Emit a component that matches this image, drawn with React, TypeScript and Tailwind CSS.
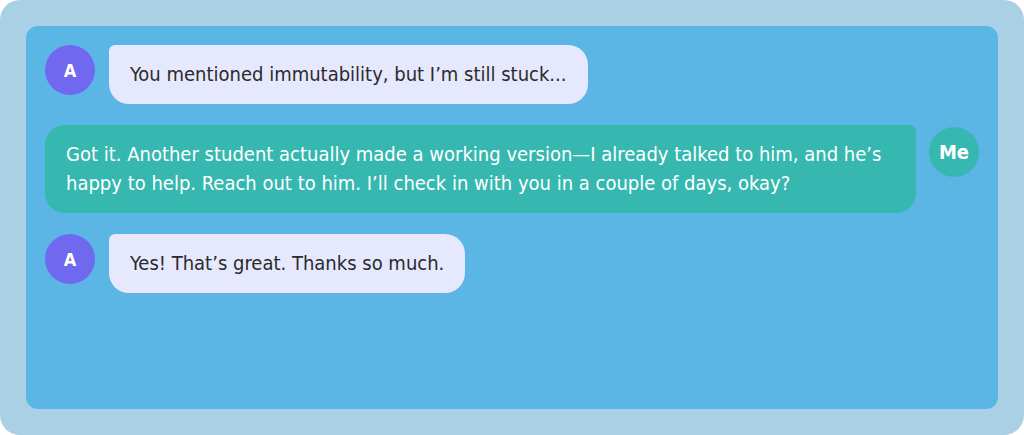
import React from 'react';

type Msg = { from: 'them' | 'me'; text: string };

const messages: Msg[] = [
  { from: 'them', text: 'You mentioned immutability, but I’m still stuck...' },
  {
    from: 'me',
    text: 'Got it. Another student actually made a working version—I already talked to him, and he’s happy to help. Reach out to him. I’ll check in with you in a couple of days, okay?',
  },
  { from: 'them', text: 'Yes! That’s great. Thanks so much.' },
];

const Avatar: React.FC<{ label: string; me?: boolean }> = ({ label, me }) => (
  <div
    className={
      me
        ? 'w-[50px] h-[50px] shrink-0 rounded-full bg-[#36b8b0] text-white flex items-center justify-center font-bold text-[20px] mt-[2px]'
        : 'w-[50px] h-[50px] shrink-0 rounded-full bg-[#7068ef] text-white flex items-center justify-center font-bold text-[18px]'
    }
  >
    {label}
  </div>
);

export default function App() {
  return (
    <div className="w-[1024px] h-[435px] bg-white" style={{ fontFamily: '"DejaVu Sans Condensed", "DejaVu Sans", sans-serif' }}>
      <div className="w-full h-full rounded-[20px] bg-[#a9d0e5] p-[26px]">
        <div className="h-full rounded-[12px] bg-[#5bb6e5] px-[19px] pt-[19px] flex flex-col gap-[21px]">
          {messages.map((m, i) =>
            m.from === 'them' ? (
              <div key={i} className="flex items-start gap-[14px]">
                <Avatar label="A" />
                <div className="bg-[#e6e8fd] text-[#2b2b2b] rounded-[20px] rounded-tl-[6px] px-[21px] py-[15px] text-[20px] leading-[29px]">
                  {m.text}
                </div>
              </div>
            ) : (
              <div key={i} className="flex items-start justify-end gap-[13px]">
                <div className="bg-[#36b8b0] text-white rounded-[20px] rounded-tr-[6px] px-[21px] py-[15px] text-[20px] leading-[29px]">
                  {m.text}
                </div>
                <Avatar label="Me" me />
              </div>
            )
          )}
        </div>
      </div>
    </div>
  );
}
